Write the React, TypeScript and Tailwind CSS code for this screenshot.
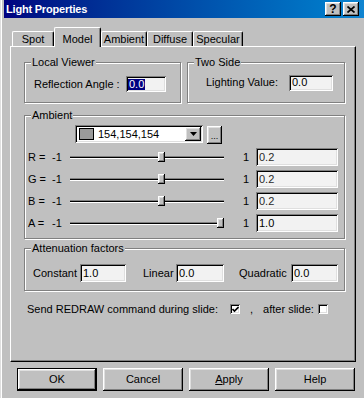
import type { ReactNode } from "react";

// Win95 style bevels
const raised =
  "shadow-[inset_-1px_-1px_0_#000,inset_1px_1px_0_#fff,inset_-2px_-2px_0_#808080,inset_2px_2px_0_#dfdfdf]";
const sunken =
  "shadow-[inset_1px_1px_0_#808080,inset_-1px_-1px_0_#fff,inset_2px_2px_0_#000,inset_-2px_-2px_0_#dfdfdf]";

function Group({ label, className, children }: { label: string; className: string; children: ReactNode }) {
  return (
    <div className={`relative border border-[#808080] shadow-[inset_1px_1px_0_#fff,1px_1px_0_#fff] ${className}`}>
      <span className="absolute -top-[8px] left-[6px] bg-[#c0c0c0] px-[1px] leading-[14px]">{label}</span>
      {children}
    </div>
  );
}

function Field({ value, className = "", dim = false }: { value: ReactNode; className?: string; dim?: boolean }) {
  return (
    <div className={`${sunken} bg-[#f2f2f2] flex items-center pl-[3px] leading-none ${dim ? "text-[#2a2a2a]" : ""} ${className}`}>
      {value}
    </div>
  );
}

function SliderRow({ label, value }: { label: string; value: number }) {
  const frac = (value + 1) / 2;
  return (
    <div className="flex items-center h-[18px]">
      <span className="w-[24px]">{label} =</span>
      <span className="w-[18px]">-1</span>
      <div className="relative w-[154px] h-[3px] border-t border-t-[#808080] border-b border-b-white bg-black">
        <div
          className={`absolute top-[-5px] w-[7px] h-[10px] bg-[#c0c0c0] ${raised}`}
          style={{ left: Math.round(frac * 147) }}
        />
      </div>
      <span className="w-[32px] pl-[19px]">1</span>
      <Field value={value.toFixed(1)} className="w-[82px] h-[18px]" dim={value < 1} />
    </div>
  );
}

function Check({ checked }: { checked: boolean }) {
  return (
    <div className={`w-[10px] h-[10px] bg-white ${sunken} flex items-center justify-center`}>
      {checked && (
        <svg width="7" height="7" viewBox="0 0 7 7">
          <path d="M0.5 3 L2.5 5 L6.5 1" stroke="#000" strokeWidth="1.6" fill="none" />
        </svg>
      )}
    </div>
  );
}

const tabs = [
  { name: "Spot", w: "w-[42px]" },
  { name: "Model", w: "w-[47px]" },
  { name: "Ambient", w: "w-[46px]" },
  { name: "Diffuse", w: "w-[46px]" },
  { name: "Specular", w: "w-[50px]" },
];

export default function App() {
  return (
    <div className="w-[364px] h-[398px] overflow-hidden bg-[#c0c0c0] pl-[4px] text-[11px] text-black font-['Liberation_Sans',Arial,sans-serif] shadow-[inset_1px_0_0_#dfdfdf,inset_2px_0_0_#fff]">
      {/* title bar */}
      <div className="h-[18px] flex items-center bg-linear-to-r from-[#000080] to-[#1084d0] pl-[2px] pr-[5px]">
        <span className="text-white font-bold tracking-[-0.2px] flex-1">Light Properties</span>
        <div className="flex gap-[2px]">
          <div className={`w-[16px] h-[14px] bg-[#c0c0c0] ${raised} flex items-center justify-center font-bold text-[12px] leading-none pb-[1px]`}>
            ?
          </div>
          <div className={`w-[16px] h-[14px] bg-[#c0c0c0] ${raised} flex items-center justify-center`}>
            <svg width="8" height="7" viewBox="0 0 8 7">
              <path d="M0.5 0.5 L7.5 6.5 M7.5 0.5 L0.5 6.5" stroke="#000" strokeWidth="1.7" />
            </svg>
          </div>
        </div>
      </div>

      <div className="pl-[6px] pt-[9px]">
        {/* tabs */}
        <div className="flex items-end h-[19px] ml-[2px]">
          {tabs.map((t) =>
            t.name === "Model" ? (
              <div
                key={t.name}
                className={`${t.w} h-[20px] -mb-[1px] relative z-10 bg-[#c0c0c0] border-l border-t border-white border-r border-r-black rounded-t-[2px] shadow-[inset_-1px_0_0_#808080] flex items-start justify-center pt-[3px]`}
              >
                {t.name}
              </div>
            ) : (
              <div
                key={t.name}
                className={`${t.w} h-[15px] bg-[#c0c0c0] border-l border-t border-white border-r border-r-black rounded-t-[2px] shadow-[inset_-1px_0_0_#808080] flex items-center justify-center`}
              >
                {t.name}
              </div>
            )
          )}
        </div>

        {/* panel */}
        <div className="w-[346px] h-[316px] border-l border-t border-white border-r border-b border-r-black border-b-black shadow-[inset_-1px_-1px_0_#808080] pl-[13px]">
          <div className="flex gap-[6px] mt-[15px]">
            <Group label="Local Viewer" className="w-[157px] h-[41px] flex items-center pl-[9px] pt-[3px]">
              <span className="w-[92px]">Reflection Angle :</span>
              <Field
                value={<span className="bg-[#000080] text-white px-[1px] -ml-[1px]">0.0</span>}
                className="w-[40px] h-[16px]"
              />
            </Group>
            <Group label="Two Side" className="w-[158px] h-[41px] flex items-center pl-[18px]">
              <span className="w-[83px]">Lighting Value:</span>
              <Field value="0.0" className="w-[44px] h-[16px]" />
            </Group>
          </div>

          <Group label="Ambient" className="w-[321px] h-[124px] mt-[12px] pl-[3px] pt-[8px]">
            <div className="flex items-center ml-[47px]">
              <div className={`w-[128px] h-[18px] bg-white ${sunken} flex items-center pl-[4px] pr-[2px]`}>
                <div className="w-[15px] h-[12px] bg-[#9a9a9a] border border-black" />
                <span className="ml-[4px] flex-1">154,154,154</span>
                <div className={`w-[16px] h-[14px] bg-[#c0c0c0] ${raised} flex items-center justify-center`}>
                  <svg width="7" height="4" viewBox="0 0 7 4">
                    <path d="M0 0 H7 L3.5 4 Z" fill="#000" />
                  </svg>
                </div>
              </div>
              <div className={`ml-[4px] mt-[2px] w-[15px] h-[18px] bg-[#c0c0c0] ${raised} flex items-end justify-center pb-[3px] text-[9px] leading-none`}>
                ...
              </div>
            </div>
            <div className="flex flex-col gap-[4px] mt-[4px]">
              <SliderRow label="R" value={0.2} />
              <SliderRow label="G" value={0.2} />
              <SliderRow label="B" value={0.2} />
              <SliderRow label="A" value={1.0} />
            </div>
          </Group>

          <Group label="Attenuation factors" className="w-[321px] h-[43px] mt-[9px] pt-[15px] pl-[8px]">
            <div className="flex items-center">
              <span className="w-[47px]">Constant</span>
              <Field value="1.0" className="w-[46px] h-[18px]" />
              <span className="w-[33px] ml-[17px]">Linear</span>
              <Field value="0.0" className="w-[48px] h-[18px]" />
              <span className="w-[52px] ml-[15px]">Quadratic</span>
              <Field value="0.0" className="w-[47px] h-[18px]" />
            </div>
          </Group>

          <div className="flex items-center h-[14px] mt-[11px] ml-[3px]">
            <span className="w-[203px]">Send REDRAW command during slide:</span>
            <Check checked />
            <span className="ml-[10px]">,</span>
            <span className="ml-[10px] w-[55px]">after slide:</span>
            <Check checked={false} />
          </div>
        </div>
      </div>

      {/* buttons */}
      <div className="flex gap-[6px] ml-[13px] mt-[6px]">
        <div className="w-[80px] h-[23px] border border-black">
          <div className={`w-full h-full bg-[#c0c0c0] ${raised} flex items-center justify-center`}>OK</div>
        </div>
        <div className={`w-[80px] h-[23px] bg-[#c0c0c0] ${raised} flex items-center justify-center`}>Cancel</div>
        <div className={`w-[80px] h-[23px] bg-[#c0c0c0] ${raised} flex items-center justify-center`}>
          <span>
            <span className="underline">A</span>pply
          </span>
        </div>
        <div className={`w-[80px] h-[23px] bg-[#c0c0c0] ${raised} flex items-center justify-center`}>Help</div>
      </div>
    </div>
  );
}
